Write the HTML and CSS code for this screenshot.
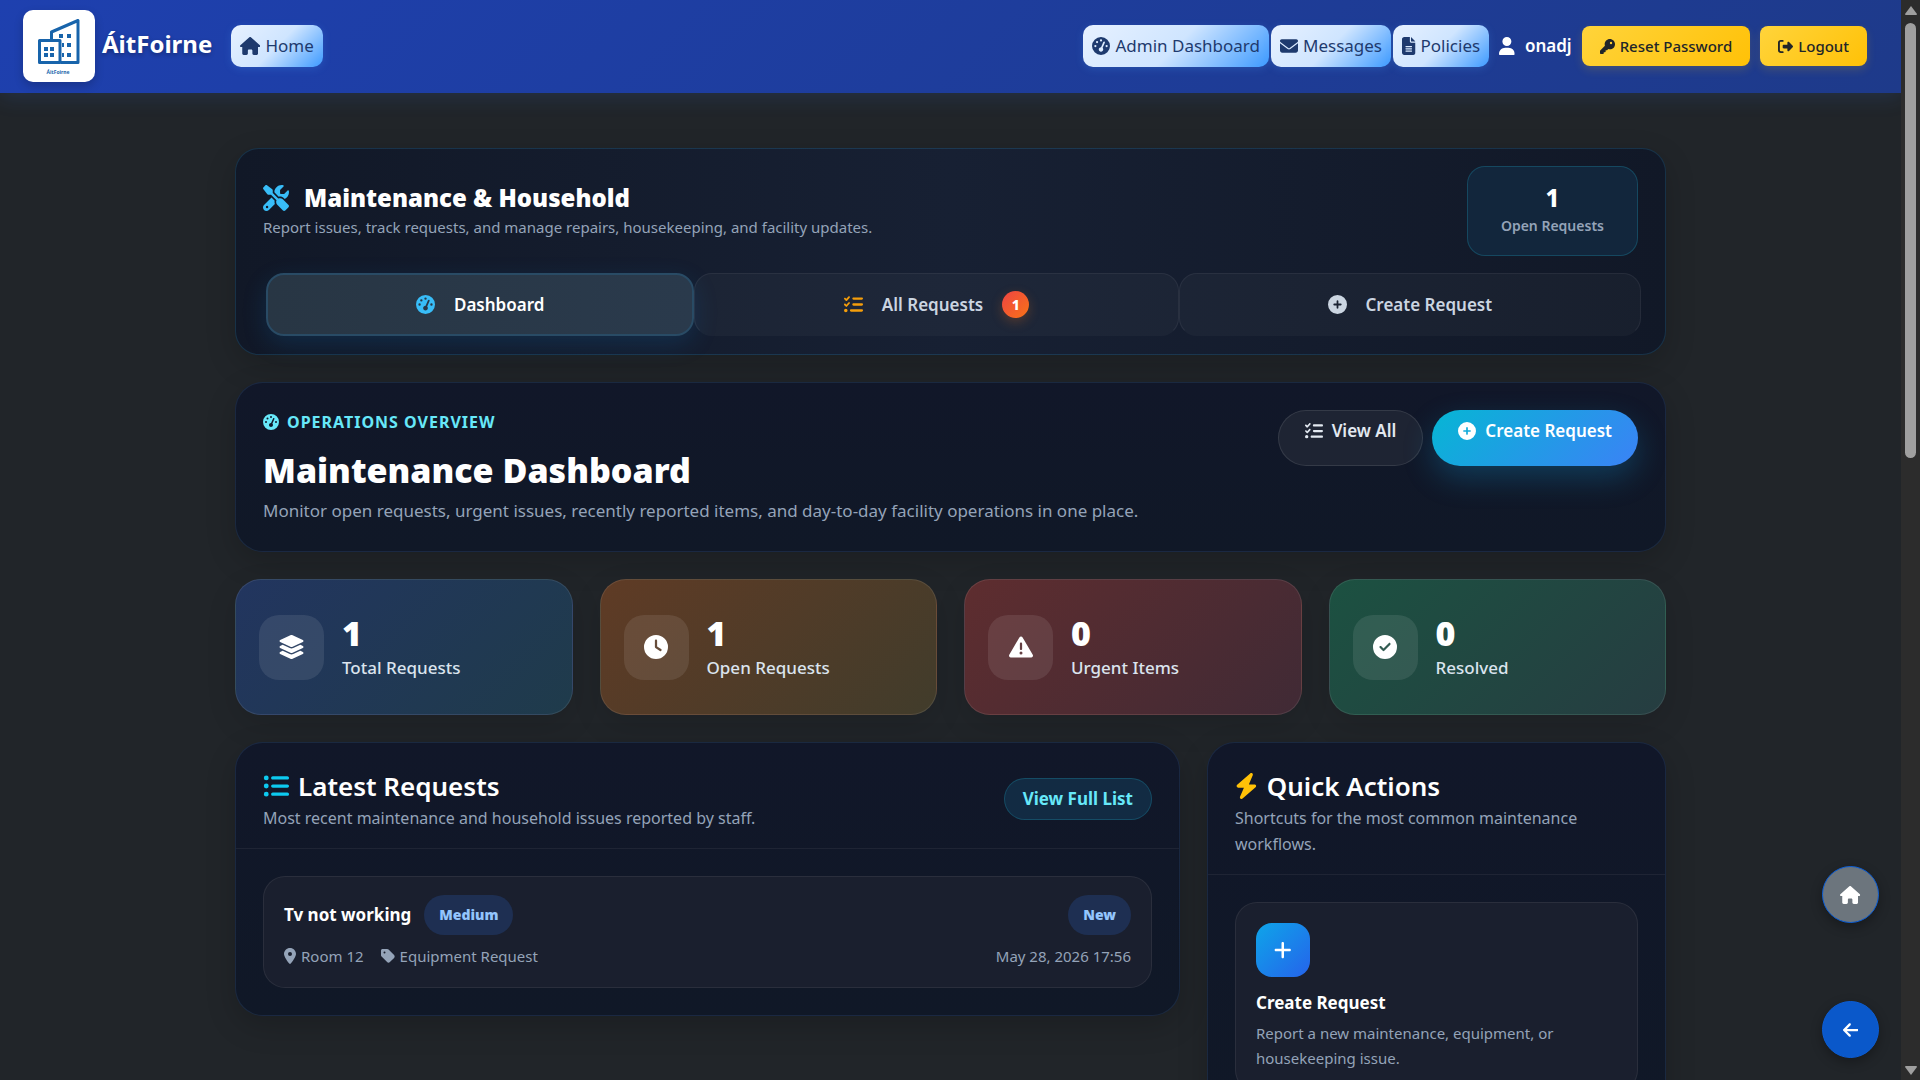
FILE: index.html
```html
<!DOCTYPE html>
<html lang="en">
<head>
  <meta charset="UTF-8">
  <meta name="viewport" content="width=device-width, initial-scale=1">
  <title>Maintenance Dashboard - ÁitFoirne</title>
  <link rel="stylesheet" href="styles.css">
</head>
<body>
  <!-- Icon sprite -->
  <svg class="sprite" aria-hidden="true">
    <symbol id="house" viewBox="0 0 576 512"><path d="M575.8 255.5c0 18-15 32.1-32 32.1l-32 0 .7 160.2c0 2.7-.2 5.4-.5 8.1l0 16.2c0 22.1-17.9 40-40 40l-16 0c-1.1 0-2.2 0-3.3-.1c-1.4 .1-2.8 .1-4.2 .1L416 512l-24 0c-22.1 0-40-17.9-40-40l0-24 0-64c0-17.7-14.3-32-32-32l-64 0c-17.7 0-32 14.3-32 32l0 64 0 24c0 22.1-17.9 40-40 40l-24 0-31.9 0c-1.5 0-3-.1-4.5-.2c-1.2 .1-2.4 .2-3.6 .2l-16 0c-22.1 0-40-17.9-40-40l0-112c0-.9 0-1.9 .1-2.8l0-69.7-32 0c-18 0-32-14-32-32.1c0-9 3-17 10-24L266.4 8c7-7 15-8 22-8s15 2 21 7L564.8 231.5c8 7 12 15 11 24z"/></symbol>
    <symbol id="gauge" viewBox="0 0 512 512"><path d="M0 256a256 256 0 1 1 512 0A256 256 0 1 1 0 256zM288 96a32 32 0 1 0 -64 0 32 32 0 1 0 64 0zM256 416c35.3 0 64-28.7 64-64c0-17.4-6.9-33.1-18.1-44.6L366 161.7c5.3-12.1-.2-26.3-12.3-31.6s-26.3 .2-31.6 12.3L257.9 288c-.6 0-1.3 0-1.9 0c-35.3 0-64 28.7-64 64s28.7 64 64 64zM176 144a32 32 0 1 0 -64 0 32 32 0 1 0 64 0zM96 288a32 32 0 1 0 0-64 32 32 0 1 0 0 64zm352-32a32 32 0 1 0 -64 0 32 32 0 1 0 64 0z"/></symbol>
    <symbol id="envelope" viewBox="0 0 512 512"><path d="M48 64C21.5 64 0 85.5 0 112c0 15.1 7.1 29.3 19.2 38.4L236.8 313.6c11.4 8.5 27 8.5 38.4 0L492.8 150.4c12.1-9.1 19.2-23.3 19.2-38.4c0-26.5-21.5-48-48-48L48 64zM0 176L0 384c0 35.3 28.7 64 64 64l384 0c35.3 0 64-28.7 64-64l0-208L294.4 339.2c-22.8 17.1-54 17.1-76.8 0L0 176z"/></symbol>
    <symbol id="file" viewBox="0 0 384 512"><path d="M64 0C28.7 0 0 28.7 0 64L0 448c0 35.3 28.7 64 64 64l256 0c35.3 0 64-28.7 64-64l0-288-128 0c-17.7 0-32-14.3-32-32L224 0 64 0zM256 0l0 128 128 0L256 0zM112 256l160 0c8.8 0 16 7.2 16 16s-7.2 16-16 16l-160 0c-8.8 0-16-7.2-16-16s7.2-16 16-16zm0 64l160 0c8.8 0 16 7.2 16 16s-7.2 16-16 16l-160 0c-8.8 0-16-7.2-16-16s7.2-16 16-16zm0 64l160 0c8.8 0 16 7.2 16 16s-7.2 16-16 16l-160 0c-8.8 0-16-7.2-16-16s7.2-16 16-16z"/></symbol>
    <symbol id="user" viewBox="0 0 448 512"><path d="M224 256A128 128 0 1 0 224 0a128 128 0 1 0 0 256zm-45.7 48C79.8 304 0 383.8 0 482.3C0 498.7 13.3 512 29.7 512l388.6 0c16.4 0 29.7-13.3 29.7-29.7C448 383.8 368.2 304 269.7 304l-91.4 0z"/></symbol>
    <symbol id="key" viewBox="0 0 512 512"><path d="M336 352c97.2 0 176-78.8 176-176S433.2 0 336 0S160 78.8 160 176c0 18.7 2.9 36.8 8.3 53.7L7 391c-4.5 4.5-7 10.6-7 17l0 80c0 13.3 10.7 24 24 24l80 0c13.3 0 24-10.7 24-24l0-40 40 0c13.3 0 24-10.7 24-24l0-40 40 0c6.4 0 12.5-2.5 17-7l33.3-33.3c16.9 5.4 35 8.3 53.7 8.3zM376 96a40 40 0 1 1 0 80 40 40 0 1 1 0-80z"/></symbol>
    <symbol id="logout" viewBox="0 0 512 512"><path d="M377.9 105.9L500.7 228.7c7.2 7.2 11.3 17.1 11.3 27.3s-4.1 20.1-11.3 27.3L377.9 406.1c-6.4 6.4-15 9.9-24 9.9c-18.7 0-33.9-15.2-33.9-33.9l0-62.1-128 0c-17.7 0-32-14.3-32-32l0-64c0-17.7 14.3-32 32-32l128 0 0-62.1c0-18.7 15.2-33.9 33.9-33.9c9 0 17.6 3.6 24 9.9zM160 96L96 96c-17.7 0-32 14.3-32 32l0 256c0 17.7 14.3 32 32 32l64 0c17.7 0 32 14.3 32 32s-14.3 32-32 32l-64 0c-53 0-96-43-96-96L0 128C0 75 43 32 96 32l64 0c17.7 0 32 14.3 32 32s-14.3 32-32 32z"/></symbol>
    <symbol id="tools" viewBox="0 0 512 512"><path d="M78.6 5C69.1-2.4 55.6-1.5 47 7L7 47c-8.5 8.5-9.4 22-2.1 31.6l80 104c4.5 5.9 11.6 9.4 19 9.4l54.1 0 109 109c-14.7 29-10 65.4 14.3 89.6l112 112c12.5 12.5 32.8 12.5 45.3 0l64-64c12.5-12.5 12.5-32.8 0-45.3l-112-112c-24.2-24.2-60.6-29-89.6-14.3l-109-109 0-54.1c0-7.5-3.5-14.5-9.4-19L78.6 5zM19.9 396.1C7.2 408.8 0 426.1 0 444.1C0 481.6 30.4 512 67.9 512c18 0 35.3-7.2 48-19.9L233.7 374.3c-7.8-20.9-9-43.6-3.6-65.1l-61.7-61.7L19.9 396.1zM512 144c0-10.5-1.1-20.7-3.2-30.5c-2.4-11.2-16.1-14.1-24.2-6l-63.9 63.9c-3 3-7.1 4.7-11.3 4.7L352 176c-8.8 0-16-7.2-16-16l0-57.4c0-4.2 1.7-8.3 4.7-11.3l63.9-63.9c8.1-8.1 5.2-21.8-6-24.2C388.7 1.1 378.5 0 368 0C288.5 0 224 64.5 224 144l0 .8 85.3 85.3c36-9.1 75.8 .5 104 28.7L429 274.5c49-23 83-72.8 83-130.5zM56 432a24 24 0 1 1 48 0 24 24 0 1 1 -48 0z"/></symbol>
    <symbol id="list-check" viewBox="0 0 512 512"><path d="M152.1 38.2c9.9 8.9 10.7 24 1.8 33.9l-72 80c-4.4 4.9-10.6 7.8-17.2 7.9s-12.9-2.4-17.6-7L7 113C-2.3 103.6-2.3 88.4 7 79s24.6-9.4 33.9 0l22.1 22.1 55.1-61.2c8.9-9.9 24-10.7 33.9-1.8zm0 160c9.9 8.9 10.7 24 1.8 33.9l-72 80c-4.4 4.9-10.6 7.8-17.2 7.9s-12.9-2.4-17.6-7L7 273c-9.4-9.4-9.4-24.6 0-33.9s24.6-9.4 33.9 0l22.1 22.1 55.1-61.2c8.9-9.9 24-10.7 33.9-1.8zM224 96c0-17.7 14.3-32 32-32l224 0c17.7 0 32 14.3 32 32s-14.3 32-32 32l-224 0c-17.7 0-32-14.3-32-32zm0 160c0-17.7 14.3-32 32-32l224 0c17.7 0 32 14.3 32 32s-14.3 32-32 32l-224 0c-17.7 0-32-14.3-32-32zM160 416c0-17.7 14.3-32 32-32l288 0c17.7 0 32 14.3 32 32s-14.3 32-32 32l-288 0c-17.7 0-32-14.3-32-32zM48 368a48 48 0 1 1 0 96 48 48 0 1 1 0-96z"/></symbol>
    <symbol id="circle-plus" viewBox="0 0 512 512"><path d="M256 512A256 256 0 1 0 256 0a256 256 0 1 0 0 512zM232 344l0-64-64 0c-13.3 0-24-10.7-24-24s10.7-24 24-24l64 0 0-64c0-13.3 10.7-24 24-24s24 10.7 24 24l0 64 64 0c13.3 0 24 10.7 24 24s-10.7 24-24 24l-64 0 0 64c0 13.3-10.7 24-24 24s-24-10.7-24-24z"/></symbol>
    <symbol id="layers" viewBox="0 0 576 512"><path d="M264.5 5.2c14.9-6.9 32.1-6.9 47 0l218.6 101c8.5 3.9 13.9 12.4 13.9 21.8s-5.4 17.9-13.9 21.8l-218.6 101c-14.9 6.9-32.1 6.9-47 0L45.9 149.8C37.4 145.8 32 137.3 32 128s5.4-17.9 13.9-21.8L264.5 5.2zM476.9 209.6l53.2 24.6c8.5 3.9 13.9 12.4 13.9 21.8s-5.4 17.9-13.9 21.8l-218.6 101c-14.9 6.9-32.1 6.9-47 0L45.9 277.8C37.4 273.8 32 265.3 32 256s5.4-17.9 13.9-21.8l53.2-24.6 152 70.2c23.4 10.8 50.4 10.8 73.8 0l152-70.2zm-152 198.2l152-70.2 53.2 24.6c8.5 3.9 13.9 12.4 13.9 21.8s-5.4 17.9-13.9 21.8l-218.6 101c-14.9 6.9-32.1 6.9-47 0L45.9 405.8C37.4 401.8 32 393.3 32 384s5.4-17.9 13.9-21.8l53.2-24.6 152 70.2c23.4 10.8 50.4 10.8 73.8 0z"/></symbol>
    <symbol id="clock" viewBox="0 0 512 512"><path d="M256 0a256 256 0 1 1 0 512A256 256 0 1 1 256 0zM232 120l0 136c0 8 4 15.5 10.7 20l96 64c11 7.4 25.9 4.4 33.3-6.7s4.4-25.9-6.7-33.3L280 243.2 280 120c0-13.3-10.7-24-24-24s-24 10.7-24 24z"/></symbol>
    <symbol id="warning" viewBox="0 0 512 512"><path d="M256 32c14.2 0 27.3 7.5 34.5 19.8l216 368c7.3 12.4 7.3 27.7 .2 40.1S486.3 480 472 480L40 480c-14.3 0-27.6-7.7-34.7-20.1s-7-27.8 .2-40.1l216-368C228.7 39.5 241.8 32 256 32zm0 128c-13.3 0-24 10.7-24 24l0 112c0 13.3 10.7 24 24 24s24-10.7 24-24l0-112c0-13.3-10.7-24-24-24zm32 224a32 32 0 1 0 -64 0 32 32 0 1 0 64 0z"/></symbol>
    <symbol id="circle-check" viewBox="0 0 512 512"><path d="M256 512A256 256 0 1 0 256 0a256 256 0 1 0 0 512zM369 209L241 337c-9.4 9.4-24.6 9.4-33.9 0l-64-64c-9.4-9.4-9.4-24.6 0-33.9s24.6-9.4 33.9 0l47 47L335 175c9.4-9.4 24.6-9.4 33.9 0s9.4 24.6 0 33.9z"/></symbol>
    <symbol id="list" viewBox="0 0 512 512"><path d="M64 144a48 48 0 1 0 0-96 48 48 0 1 0 0 96zM192 64c-17.7 0-32 14.3-32 32s14.3 32 32 32l288 0c17.7 0 32-14.3 32-32s-14.3-32-32-32L192 64zm0 160c-17.7 0-32 14.3-32 32s14.3 32 32 32l288 0c17.7 0 32-14.3 32-32s-14.3-32-32-32l-288 0zm0 160c-17.7 0-32 14.3-32 32s14.3 32 32 32l288 0c17.7 0 32-14.3 32-32s-14.3-32-32-32l-288 0zM64 464a48 48 0 1 0 0-96 48 48 0 1 0 0 96zm48-208a48 48 0 1 0 -96 0 48 48 0 1 0 96 0z"/></symbol>
    <symbol id="bolt" viewBox="0 0 448 512"><path d="M349.4 44.6c5.9-13.7 1.5-29.7-10.6-38.5s-28.6-8-39.9 1.8l-256 224c-10 8.8-13.6 22.9-8.9 35.3S50.7 288 64 288l111.5 0L98.6 467.4c-5.9 13.7-1.5 29.7 10.6 38.5s28.6 8 39.9-1.8l256-224c10-8.8 13.6-22.9 8.9-35.3s-16.6-20.7-30-20.7l-111.5 0L349.4 44.6z"/></symbol>
    <symbol id="location" viewBox="0 0 384 512"><path d="M215.7 499.2C267 435 384 279.4 384 192C384 86 298 0 192 0S0 86 0 192c0 87.4 117 243 168.3 307.2c12.3 15.3 35.1 15.3 47.4 0zM192 128a64 64 0 1 1 0 128 64 64 0 1 1 0-128z"/></symbol>
    <symbol id="tag" viewBox="0 0 448 512"><path d="M0 80L0 229.5c0 17 6.7 33.3 18.7 45.3l176 176c25 25 65.5 25 90.5 0L418.7 317.3c25-25 25-65.5 0-90.5l-176-176c-12-12-28.3-18.7-45.3-18.7L48 32C21.5 32 0 53.5 0 80zm112 32a32 32 0 1 1 0 64 32 32 0 1 1 0-64z"/></symbol>
    <symbol id="plus" viewBox="0 0 448 512"><path d="M256 80c0-17.7-14.3-32-32-32s-32 14.3-32 32l0 144L48 224c-17.7 0-32 14.3-32 32s14.3 32 32 32l144 0 0 144c0 17.7 14.3 32 32 32s32-14.3 32-32l0-144 144 0c17.7 0 32-14.3 32-32s-14.3-32-32-32l-144 0 0-144z"/></symbol>
    <symbol id="arrow-left" viewBox="0 0 448 512"><path d="M9.4 233.4c-12.5 12.5-12.5 32.8 0 45.3l160 160c12.5 12.5 32.8 12.5 45.3 0s12.5-32.8 0-45.3L109.2 288 416 288c17.7 0 32-14.3 32-32s-14.3-32-32-32l-306.7 0L214.6 118.6c12.5-12.5 12.5-32.8 0-45.3s-32.8-12.5-45.3 0l-160 160z"/></symbol>
  </svg>

  <div class="shell">
    <div class="page">
      <nav class="navbar">
        <a class="brand" href="#">
          <svg class="brand-logo" viewBox="0 0 72 72" role="img" aria-label="ÁitFoirne logo">
            <path class="logo-line" d="M28.500 29V22L55 10.500V52.500H38"/>
            <path class="logo-line" d="M16.500 30.500H37V52.500H16.500z"/>
            <path class="logo-fill" d="M36 24h4v4h-4zM44 24h4v4h-4zM39 33h2v4h-2zM44 33h4v4h-4zM39 43h2v4h-2zM44 43h4v4h-4zM21 37h4v4h-4zM27 37h4v4h-4zM21 43h4v4h-4zM27 43h4v4h-4z"/>
            <text class="logo-text" x="35" y="64" text-anchor="middle">ÁitFoirne</text>
          </svg>
          <span class="brand-name">ÁitFoirne</span>
        </a>
        <a class="nav-pill nav-home" href="#"><svg class="icon icon-wide"><use href="#house"/></svg>Home</a>

        <div class="nav-right">
          <div class="nav-links">
            <a class="nav-pill" href="#"><svg class="icon"><use href="#gauge"/></svg>Admin Dashboard</a>
            <a class="nav-pill" href="#"><svg class="icon"><use href="#envelope"/></svg>Messages</a>
            <a class="nav-pill" href="#"><svg class="icon icon-narrow"><use href="#file"/></svg>Policies</a>
          </div>
          <span class="nav-user"><svg class="icon icon-mid"><use href="#user"/></svg>onadj</span>
          <button class="btn-warning" type="button"><svg class="icon"><use href="#key"/></svg>Reset Password</button>
          <button class="btn-warning" type="button"><svg class="icon"><use href="#logout"/></svg>Logout</button>
        </div>
      </nav>

      <main class="container">
        <section class="card module-nav">
          <div class="module-head">
            <div>
              <h1 class="module-title"><svg class="icon"><use href="#tools"/></svg>Maintenance &amp; Household</h1>
              <p class="module-text">Report issues, track requests, and manage repairs, housekeeping, and facility updates.</p>
            </div>
            <div class="module-stat">
              <strong>1</strong>
              <span>Open Requests</span>
            </div>
          </div>
          <div class="tabs">
            <a class="tab active" href="#"><svg class="icon"><use href="#gauge"/></svg>Dashboard</a>
            <a class="tab tab-all" href="#"><svg class="icon"><use href="#list-check"/></svg>All Requests<span class="tab-count">1</span></a>
            <a class="tab" href="#"><svg class="icon"><use href="#circle-plus"/></svg>Create Request</a>
          </div>
        </section>

        <section class="card hero">
          <div>
            <div class="eyebrow"><svg class="icon"><use href="#gauge"/></svg>OPERATIONS OVERVIEW</div>
            <h2 class="hero-title">Maintenance Dashboard</h2>
            <p class="hero-text">Monitor open requests, urgent issues, recently reported items, and day-to-day facility operations in one place.</p>
          </div>
          <div class="hero-actions">
            <a class="btn-round btn-ghost" href="#"><svg class="icon"><use href="#list-check"/></svg>View All</a>
            <a class="btn-round btn-primary" href="#"><svg class="icon"><use href="#circle-plus"/></svg>Create Request</a>
          </div>
        </section>

        <section class="stats">
          <div class="stat stat-total">
            <div class="stat-icon"><svg class="icon icon-wide"><use href="#layers"/></svg></div>
            <div><div class="stat-number">1</div><div class="stat-label">Total Requests</div></div>
          </div>
          <div class="stat stat-open">
            <div class="stat-icon"><svg class="icon"><use href="#clock"/></svg></div>
            <div><div class="stat-number">1</div><div class="stat-label">Open Requests</div></div>
          </div>
          <div class="stat stat-urgent">
            <div class="stat-icon"><svg class="icon"><use href="#warning"/></svg></div>
            <div><div class="stat-number">0</div><div class="stat-label">Urgent Items</div></div>
          </div>
          <div class="stat stat-resolved">
            <div class="stat-icon"><svg class="icon"><use href="#circle-check"/></svg></div>
            <div><div class="stat-number">0</div><div class="stat-label">Resolved</div></div>
          </div>
        </section>

        <div class="columns">
          <section class="card panel">
            <div class="panel-head">
              <div>
                <h3 class="panel-title"><svg class="icon icon-cyan"><use href="#list"/></svg>Latest Requests</h3>
                <p class="panel-text">Most recent maintenance and household issues reported by staff.</p>
              </div>
              <a class="link-pill" href="#">View Full List</a>
            </div>
            <div class="panel-body">
              <a class="request" href="#">
                <div>
                  <div class="request-top"><span class="request-name">Tv not working</span><span class="badge">Medium</span></div>
                  <div class="request-meta">
                    <span><svg class="icon icon-narrow"><use href="#location"/></svg>Room 12</span>
                    <span><svg class="icon icon-mid"><use href="#tag"/></svg>Equipment Request</span>
                  </div>
                </div>
                <div class="request-side">
                  <span class="badge">New</span>
                  <span class="request-date">May 28, 2026 17:56</span>
                </div>
              </a>
            </div>
          </section>

          <section class="card panel">
            <div class="panel-head">
              <div>
                <h3 class="panel-title"><svg class="icon icon-mid icon-yellow"><use href="#bolt"/></svg>Quick Actions</h3>
                <p class="panel-text">Shortcuts for the most common maintenance workflows.</p>
              </div>
            </div>
            <div class="panel-body">
              <a class="action" href="#">
                <span class="action-icon"><svg class="icon icon-mid"><use href="#plus"/></svg></span>
                <span class="action-name">Create Request</span>
                <span class="action-text">Report a new maintenance, equipment, or housekeeping issue.</span>
              </a>
            </div>
          </section>
        </div>
      </main>
    </div>

    <div class="scrollbar" aria-hidden="true">
      <svg class="scroll-arrow" viewBox="0 0 12 9"><path d="M6 0L12 8Q12 9 11 9H1Q0 9 0 8z"/></svg>
      <div class="scroll-track"><div class="scroll-thumb"></div></div>
      <svg class="scroll-arrow" viewBox="0 0 12 9"><path d="M6 9L0 1Q0 0 1 0H11Q12 0 12 1z"/></svg>
    </div>
  </div>

  <div class="floating">
    <a class="fab fab-home" href="#" aria-label="Home"><svg class="icon icon-wide"><use href="#house"/></svg></a>
    <a class="fab fab-back" href="#" aria-label="Back"><svg class="icon icon-mid"><use href="#arrow-left"/></svg></a>
  </div>
</body>
</html>
```

FILE: styles.css
```css
* {
  box-sizing: border-box;
}

body {
  margin: 0;
  background: #212529;
  color: #fff;
  font-family: "Segoe UI", "Noto Sans", "Open Sans", sans-serif;
  font-size: 15px;
  line-height: 26px;
}

h1, h2, h3, p {
  margin: 0;
}

a {
  color: inherit;
  text-decoration: none;
}

.sprite {
  display: none;
}

.icon {
  width: 1em;
  height: 1em;
  flex: none;
  fill: currentColor;
  fill-rule: evenodd;
}

.icon-wide {
  width: 1.125em;
}

.icon-mid {
  width: 0.875em;
}

.icon-narrow {
  width: 0.75em;
}

.shell {
  display: flex;
  height: 100vh;
}

.page {
  flex: 1;
  min-width: 0;
  overflow-y: auto;
  scrollbar-width: none;
}

/* Navbar */
.navbar {
  display: flex;
  align-items: center;
  padding: 10px 34px 11px 23px;
  background: linear-gradient(135deg, #1e40af, #1e3a8a);
  box-shadow: 0 4px 20px rgba(59, 130, 246, 0.15);
}

.brand {
  display: flex;
  align-items: center;
  gap: 7px;
}

.brand-logo {
  width: 72px;
  height: 72px;
  border-radius: 10px;
  background: #fff;
  box-shadow: 0 4px 10px rgba(0, 0, 0, 0.2);
}

.logo-line {
  fill: none;
  stroke: #1864ab;
  stroke-width: 3;
  stroke-linejoin: round;
}

.logo-fill {
  fill: #1864ab;
}

.logo-text {
  fill: #1864ab;
  font-size: 5px;
  font-weight: 700;
}

.brand-name {
  padding-bottom: 5px;
  font-size: 24px;
  font-weight: 700;
  text-shadow: 0 2px 4px rgba(0, 0, 0, 0.3);
}

.nav-pill {
  display: flex;
  align-items: center;
  gap: 5px;
  padding: 8px 9px;
  border-radius: 10px;
  background: linear-gradient(135deg, #e7f1ff 0%, #cfe5ff 50%, #3d9aff 100%);
  color: #1e3a6e;
  font-size: 17px;
  box-shadow: 0 2px 8px rgba(77, 163, 255, 0.2);
}

.nav-pill .icon {
  font-size: 18px;
}

.nav-home {
  margin-left: 19px;
}

.nav-right {
  display: flex;
  align-items: center;
  gap: 10px;
  margin-left: auto;
}

.nav-links {
  display: flex;
  gap: 2px;
}

.nav-user {
  display: flex;
  align-items: center;
  gap: 10px;
  font-size: 17px;
  font-weight: 600;
}

.nav-user .icon {
  font-size: 18px;
}

.btn-warning {
  display: flex;
  align-items: center;
  gap: 5px;
  padding: 7px 18px;
  border: 0;
  border-radius: 8px;
  background: linear-gradient(135deg, #ffd43b, #ffc107);
  color: #212529;
  font-family: inherit;
  font-size: 15px;
  font-weight: 500;
  line-height: 26px;
  cursor: pointer;
  box-shadow: 0 4px 10px rgba(255, 193, 7, 0.15);
}

/* Layout */
.container {
  display: flex;
  flex-direction: column;
  gap: 27px;
  max-width: 1431px;
  margin: 0 auto;
  padding: 55px 0 60px;
}

.card {
  border: 1px solid rgba(96, 165, 250, 0.12);
  border-radius: 28px;
  background: linear-gradient(180deg, #111729, #101827);
  box-shadow: 0 10px 30px rgba(0, 0, 0, 0.18);
}

/* Module header */
.module-nav {
  padding: 17px 24px 18px 27px;
  border-radius: 24px;
  border-color: rgba(56, 189, 248, 0.16);
  background: linear-gradient(90deg, #111827 0%, #172033 50%, #111827 100%);
}

.module-head {
  display: flex;
  align-items: center;
  justify-content: space-between;
  padding-right: 3px;
}

.module-title {
  display: flex;
  align-items: center;
  gap: 15px;
  font-size: 24px;
  font-weight: 900;
  line-height: 32px;
}

.module-title .icon {
  font-size: 26px;
  color: #38bdf8;
}

.module-text {
  color: #94a3b8;
  font-size: 15px;
}

.module-stat {
  display: flex;
  flex-direction: column;
  align-items: center;
  padding: 16px 33px;
  border: 1px solid rgba(34, 211, 238, 0.2);
  border-radius: 18px;
  background: #12263c;
  color: #94a3b8;
  font-size: 14px;
  font-weight: 600;
}

.module-stat strong {
  color: #fff;
  font-size: 24px;
  font-weight: 800;
  line-height: 30px;
}

.tabs {
  display: grid;
  grid-template-columns: 428fr 484fr 462fr;
  margin-top: 17px;
  padding-left: 3px;
}

.tab {
  display: flex;
  align-items: center;
  justify-content: center;
  gap: 19px;
  height: 63px;
  border: 1px solid rgba(255, 255, 255, 0.06);
  border-bottom-color: transparent;
  border-radius: 18px;
  background: rgba(255, 255, 255, 0.03);
  color: #cbd5e1;
  font-size: 17px;
  font-weight: 600;
}

.tab .icon {
  font-size: 19px;
}

.tab.active {
  border: 2px solid #294b65;
  background: linear-gradient(90deg, #283644, #2a3a4c);
  color: #fff;
  box-shadow: 0 8px 24px rgba(14, 116, 190, 0.2);
}

.tab.active .icon {
  color: #38bdf8;
}

.tab-all .icon {
  color: #f59e0b;
}

.tab-count {
  width: 27px;
  height: 27px;
  border-radius: 50%;
  background: linear-gradient(135deg, #ef4444, #f97316);
  color: #fff;
  font-size: 14px;
  font-weight: 800;
  line-height: 27px;
  text-align: center;
  box-shadow: 0 4px 12px rgba(249, 115, 22, 0.25);
}

/* Hero */
.hero {
  display: flex;
  align-items: flex-start;
  justify-content: space-between;
  padding: 27px 27px 24px;
}

.eyebrow {
  display: flex;
  align-items: center;
  gap: 8px;
  color: #67e8f9;
  font-size: 16px;
  font-weight: 700;
  line-height: 24px;
  letter-spacing: 1px;
}

.hero-title {
  margin-top: 11px;
  font-size: 34px;
  font-weight: 900;
  line-height: 50px;
}

.hero-text {
  color: #94a3b8;
  font-size: 17px;
  line-height: 32px;
}

.hero-actions {
  display: flex;
  gap: 9px;
}

.btn-round {
  display: flex;
  align-items: center;
  gap: 9px;
  height: 56px;
  padding: 0 26px 14px;
  border: 1px solid transparent;
  border-radius: 28px;
  font-size: 17px;
  font-weight: 600;
}

.btn-round .icon {
  font-size: 18px;
}

.btn-ghost {
  border-color: rgba(255, 255, 255, 0.1);
  background: #1e2433;
  color: #e2e8f0;
}

.btn-primary {
  border: 0;
  background: linear-gradient(135deg, #06b6d4, #3b82f6);
  box-shadow: 0 12px 30px rgba(14, 165, 233, 0.25);
}

/* Stats */
.stats {
  display: grid;
  grid-template-columns: repeat(4, 1fr);
  gap: 27px;
}

.stat {
  display: flex;
  align-items: center;
  gap: 18px;
  height: 136px;
  padding: 0 23px;
  border: 1px solid rgba(255, 255, 255, 0.09);
  border-radius: 26px;
  box-shadow: 0 10px 30px rgba(0, 0, 0, 0.12);
}

.stat-total {
  background: linear-gradient(135deg, #22355f, #1f3b4b);
}

.stat-open {
  background: linear-gradient(135deg, #5f3b25, #413c2b);
}

.stat-urgent {
  background: linear-gradient(135deg, #5e2d2f, #402a35);
}

.stat-resolved {
  background: linear-gradient(135deg, #1c5141, #263d41);
}

.stat-icon {
  display: flex;
  align-items: center;
  justify-content: center;
  width: 65px;
  height: 65px;
  border-radius: 20px;
  background: rgba(255, 255, 255, 0.09);
  font-size: 24px;
}

.stat-number {
  font-size: 34px;
  font-weight: 900;
  line-height: 42px;
}

.stat-label {
  color: #dbe4ee;
  font-size: 17px;
  font-weight: 500;
  line-height: 28px;
}

/* Panels */
.columns {
  display: grid;
  grid-template-columns: 945fr 459fr;
  align-items: start;
  gap: 27px;
}

.panel-head {
  display: flex;
  align-items: center;
  justify-content: space-between;
  padding: 24px 27px 17px;
  border-bottom: 1px solid rgba(255, 255, 255, 0.06);
}

.panel-title {
  display: flex;
  align-items: center;
  gap: 9px;
  font-size: 26px;
  font-weight: 600;
  line-height: 38px;
}

.panel-text {
  color: #94a3b8;
  font-size: 16px;
}

.icon-cyan {
  color: #0dcaf0;
}

.icon-yellow {
  color: #ffc107;
}

.link-pill {
  padding: 7px 18px;
  border: 1px solid rgba(34, 211, 238, 0.2);
  border-radius: 21px;
  background: #122b43;
  color: #67e8f9;
  font-size: 17px;
  font-weight: 700;
}

.panel-body {
  padding: 27px;
}

.request {
  display: flex;
  justify-content: space-between;
  padding: 18px 20px;
  border: 1px solid rgba(255, 255, 255, 0.07);
  border-radius: 22px;
  background: #1a1f2e;
}

.request-top {
  display: flex;
  align-items: center;
  gap: 13px;
}

.request-name {
  font-size: 17px;
  font-weight: 700;
}

.badge {
  padding: 7px 15px;
  border-radius: 20px;
  background: #1e2f52;
  color: #93c5fd;
  font-size: 14px;
  font-weight: 900;
}

.request-meta {
  display: flex;
  gap: 17px;
  margin-top: 8px;
  color: #94a3b8;
}

.request-meta span {
  display: flex;
  align-items: center;
  gap: 5px;
}

.request-meta .icon {
  font-size: 16px;
}

.request-side {
  display: flex;
  flex-direction: column;
  align-items: flex-end;
  gap: 8px;
}

.request-date {
  color: #94a3b8;
}

.action {
  display: flex;
  flex-direction: column;
  padding: 20px;
  border: 1px solid rgba(255, 255, 255, 0.07);
  border-radius: 22px;
  background: #1a1f2e;
}

.action-icon {
  display: flex;
  align-items: center;
  justify-content: center;
  width: 54px;
  height: 54px;
  margin-bottom: 13px;
  border-radius: 16px;
  background: linear-gradient(135deg, #0ea5e9, #2563eb);
  font-size: 20px;
}

.action-name {
  font-size: 17px;
  font-weight: 700;
}

.action-text {
  margin-top: 5px;
  color: #94a3b8;
  line-height: 25px;
}

/* Floating buttons */
.floating {
  position: fixed;
  right: 41px;
  bottom: 22px;
  display: flex;
  flex-direction: column;
  gap: 78px;
}

.fab {
  display: flex;
  align-items: center;
  justify-content: center;
  width: 57px;
  height: 57px;
  border: 1px solid #0b5ed7;
  border-radius: 50%;
  font-size: 18px;
  box-shadow: 0 4px 12px rgba(0, 0, 0, 0.3);
}

.fab-home {
  background: #6c757d;
}

.fab-back {
  background: #0a58ca;
}

/* Scrollbar */
.scrollbar {
  display: flex;
  flex-direction: column;
  align-items: center;
  gap: 8px;
  width: 19px;
  padding: 6px 0 5px;
  background: #2c2c2c;
}

.scroll-arrow {
  width: 12px;
  height: 9px;
  fill: #9f9f9f;
}

.scroll-track {
  flex: 1;
}

.scroll-thumb {
  width: 11px;
  height: 42%;
  border-radius: 6px;
  background: #9f9f9f;
}
```
